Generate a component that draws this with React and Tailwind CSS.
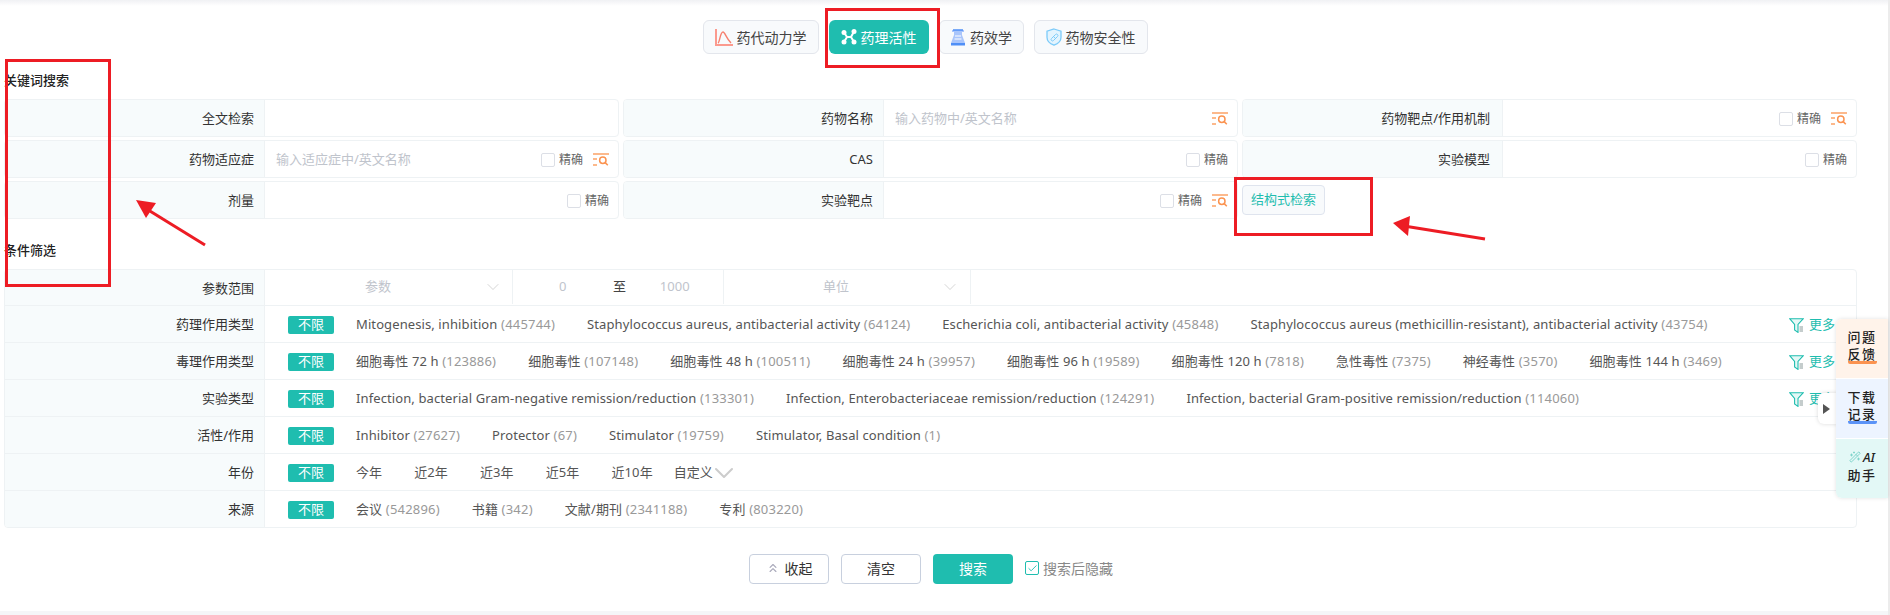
import React from 'react';
import { ChevronDown, ChevronsUp, Check, WandSparkles } from 'lucide-react';

const PkIcon = () => (
  <svg width="18" height="18" viewBox="0 0 18 18" fill="none">
    <path d="M1 1v16h17" stroke="#fb9a8e" strokeWidth="2" />
    <path d="M3 15c2-1 2-11 5-11 2 0 3 6 8 11" stroke="#f6806f" strokeWidth="1.4" />
  </svg>
);

const ActivityIcon = () => (
  <svg width="16" height="16" viewBox="0 0 16 16" fill="none">
    <path d="M3 3.5L6 8l-3 5M13 2.5L10 8l3 5M6 8h4" stroke="#fff" strokeWidth="2" />
    <circle cx="3" cy="3.5" r="2.5" fill="#fff" />
    <circle cx="13" cy="2.5" r="2.5" fill="#fff" />
    <circle cx="3" cy="13" r="2.5" fill="#fff" />
    <circle cx="13" cy="13" r="2.5" fill="#fff" />
  </svg>
);

const EffectIcon = () => (
  <svg width="16" height="17" viewBox="0 0 16 17" fill="none">
    <path d="M2 1h12v2h-2v3l3 8v2H1v-2l3-8V3H2z" fill="#a9c5fb" />
    <path d="M1 14h14v2.5H1z" fill="#4f8ff7" />
    <path d="M5 7h6M4.5 10h7" stroke="#fff" strokeWidth="1.2" />
    <path d="M3 1h10" stroke="#4f8ff7" strokeWidth="1.5" />
  </svg>
);

const SafetyIcon = () => (
  <svg width="16" height="18" viewBox="0 0 16 18" fill="none">
    <path d="M8 1l7 2.2v6c0 4-3.2 6.6-7 8-3.8-1.4-7-4-7-8v-6z" fill="#e3f4fe" stroke="#7ccbf9" strokeWidth="1.3" />
    <path d="M5.5 10.5l4-4a1.4 1.4 0 012 2l-4 4a1.4 1.4 0 01-2-2zM7.5 8.5l2 2" stroke="#7ccbf9" strokeWidth="1" />
  </svg>
);

const SearchListIcon = () => (
  <svg width="16" height="14" viewBox="0 0 16 14" fill="none" className="shrink-0">
    <path d="M0 1h16M0 6h4M0 12h4" stroke="#fca267" strokeWidth="1.4" />
    <circle cx="9.8" cy="7.2" r="3.2" stroke="#fb9350" strokeWidth="1.5" />
    <path d="M12.2 9.6l2.6 2.6" stroke="#fb9350" strokeWidth="1.5" />
  </svg>
);

const FilterListIcon = () => (
  <svg width="15" height="15" viewBox="0 0 15 15" fill="none" className="shrink-0">
    <path d="M.7 .7h13.6L9 6.4v8L5.6 12V6.4z" stroke="#1fbdaf" strokeWidth="1.1" fill="#e5f8f6" />
    <path d="M10.5 9h3.5M10.5 11h3.5M10.5 13h3.5" stroke="#8a9a9a" strokeWidth="1" />
  </svg>
);

function ExactCheck() {
  return (
    <label className="flex items-center gap-[4px] shrink-0">
      <span className="w-[14px] h-[14px] rounded-[2px] border border-[#dcdfe6] bg-white" />
      <span className="text-[12px] text-[#666]">精确</span>
    </label>
  );
}

function Field({ label, placeholder, exact, search, lastCol }) {
  return (
    <div className="flex h-[38px] rounded-[4px] border border-[#eef2f4] overflow-hidden">
      <div
        className={`w-[260px] shrink-0 bg-[#f7fbfc] border-r border-[#eef2f4] flex items-center justify-end pt-[2px] text-[13px] text-[#333] ${
          lastCol ? 'pr-[12px]' : 'pr-[10px]'
        }`}
      >
        {label}
      </div>
      <div className="flex-1 flex items-center pl-[11px] pr-[9px] pt-[2px] gap-[10px]">
        <span className="flex-1 text-[13px] text-[#c0c4cc]">{placeholder}</span>
        {exact && <ExactCheck />}
        {search && <SearchListIcon />}
      </div>
    </div>
  );
}

function FilterItem({ name, count }) {
  return (
    <span className="text-[13px] text-[#555] whitespace-nowrap tracking-[0.1px]">
      {name}
      {count && <span className="text-[#999] tracking-[0.2px]"> ({count})</span>}
    </span>
  );
}

function FilterRow({ label, items, more, children, last }) {
  return (
    <div className={`flex ${last ? 'h-[36px]' : 'h-[37px] border-b border-[#eef2f4]'}`}>
      <div className="w-[260px] shrink-0 bg-[#f7fbfc] border-r border-[#eef2f4] flex items-center justify-end pr-[10px] pt-[2px] text-[13px] text-[#333]">
        {label}
      </div>
      <div className="flex-1 flex items-center pl-[23px] pr-[21px] pt-[2px]">
        <span className="w-[46px] h-[18px] rounded-[2px] bg-[#1fbdaf] text-white text-[13px] flex items-center justify-center mr-[22px]">
          不限
        </span>
        <div className="flex-1 flex items-center gap-[32px]">
          {items.map((it) => (
            <FilterItem key={it[0]} name={it[0]} count={it[1]} />
          ))}
          {children}
        </div>
        {more && (
          <span className="flex items-center gap-[5px] text-[13px] text-[#1fbdaf]">
            <FilterListIcon />
            更多
          </span>
        )}
      </div>
    </div>
  );
}

const tabs = [
  { name: '药代动力学', icon: <PkIcon />, w: 'w-[116px]' },
  { name: '药理活性', icon: <ActivityIcon />, w: 'w-[100px]', active: true },
  { name: '药效学', icon: <EffectIcon />, w: 'w-[85px]' },
  { name: '药物安全性', icon: <SafetyIcon />, w: 'w-[114px]' },
];

const pharmaItems = [
  ['Mitogenesis, inhibition', '445744'],
  ['Staphylococcus aureus, antibacterial activity', '64124'],
  ['Escherichia coli, antibacterial activity', '45848'],
  ['Staphylococcus aureus (methicillin-resistant), antibacterial activity', '43754'],
];

const toxItems = [
  ['细胞毒性 72 h', '123886'],
  ['细胞毒性', '107148'],
  ['细胞毒性 48 h', '100511'],
  ['细胞毒性 24 h', '39957'],
  ['细胞毒性 96 h', '19589'],
  ['细胞毒性 120 h', '7818'],
  ['急性毒性', '7375'],
  ['神经毒性', '3570'],
  ['细胞毒性 144 h', '3469'],
];

const expItems = [
  ['Infection, bacterial Gram-negative remission/reduction', '133301'],
  ['Infection, Enterobacteriaceae remission/reduction', '124291'],
  ['Infection, bacterial Gram-positive remission/reduction', '114060'],
];

const activityItems = [
  ['Inhibitor', '27627'],
  ['Protector', '67'],
  ['Stimulator', '19759'],
  ['Stimulator, Basal condition', '1'],
];

const yearItems = [['今年'], ['近2年'], ['近3年'], ['近5年'], ['近10年']];

const sourceItems = [
  ['会议', '542896'],
  ['书籍', '342'],
  ['文献/期刊', '2341188'],
  ['专利', '803220'],
];

export default function App() {
  return (
    <div className="relative w-[1890px] h-[615px] overflow-hidden bg-white flex flex-col font-['Noto_Sans','Noto_Sans_CJK_SC',sans-serif]">
      <div className="h-[6px] shrink-0 bg-gradient-to-b from-[#f0f1f4] to-white" />

      {/* tabs */}
      <div className="mt-[14px] flex justify-center gap-[10px] pr-[40px]">
        {tabs.map((t) => (
          <div
            key={t.name}
            className={`${t.w} h-[34px] rounded-[6px] flex items-center justify-center gap-[4px] text-[14px] ${
              t.active ? 'bg-[#1fbdaf] text-white' : 'bg-[#f8fafc] border border-[#e3e6ec] text-[#444]'
            }`}
          >
            {t.icon}
            {t.name}
          </div>
        ))}
      </div>

      <div className="pl-[4px] w-[1857px]">
        <div className="mt-[16px] mb-[9px] h-[20px] leading-[20px] text-[13px] font-medium text-[#222]">关键词搜索</div>
        <div className="grid grid-cols-3 gap-x-[4px] gap-y-[3px]">
          <Field label="全文检索" />
          <Field label="药物名称" placeholder="输入药物中/英文名称" search />
          <Field label="药物靶点/作用机制" exact search lastCol />
          <Field label="药物适应症" placeholder="输入适应症中/英文名称" exact search />
          <Field label="CAS" exact />
          <Field label="实验模型" exact lastCol />
          <Field label="剂量" exact />
          <Field label="实验靶点" exact search />
          <div className="pt-[4px]">
            <button className="w-[83px] h-[30px] rounded-[4px] border border-[#dfe4ee] bg-[#f8fafc] text-[13px] text-[#1fbdaf]">
              结构式检索
            </button>
          </div>
        </div>

        <div className="mt-[21px] mb-[9px] h-[20px] leading-[20px] text-[13px] font-medium text-[#222]">条件筛选</div>
        <div className="rounded-[4px] border border-[#eef2f4] overflow-hidden">
          <div className="flex h-[36px] border-b border-[#eef2f4]">
            <div className="w-[260px] shrink-0 bg-[#f7fbfc] border-r border-[#eef2f4] flex items-center justify-end pr-[10px] pt-[2px] text-[13px] text-[#333]">
              参数范围
            </div>
            <div className="flex h-[34px] text-[13px] text-[#c0c4cc]">
              <div className="w-[248px] border-r border-[#eef2f4] flex items-center pr-[9px]">
                <span className="flex-1 text-center pl-[8px]">参数</span>
                <ChevronDown size={20} strokeWidth={1} className="text-[#ccc]" />
              </div>
              <div className="w-[211px] border-r border-[#eef2f4] flex items-center">
                <span className="w-[100px] text-center">0</span>
                <span className="w-[14px] text-center text-[#444]">至</span>
                <span className="w-[97px] text-center">1000</span>
              </div>
              <div className="w-[247px] border-r border-[#eef2f4] flex items-center pr-[10px]">
                <span className="flex-1 text-center pl-[8px]">单位</span>
                <ChevronDown size={20} strokeWidth={1} className="text-[#ccc]" />
              </div>
            </div>
          </div>
          <FilterRow label="药理作用类型" items={pharmaItems} more />
          <FilterRow label="毒理作用类型" items={toxItems} more />
          <FilterRow label="实验类型" items={expItems} more />
          <FilterRow label="活性/作用" items={activityItems} />
          <FilterRow label="年份" items={yearItems}>
            <span className="flex items-center text-[13px] text-[#555] -ml-[11px]">
              自定义
              <ChevronDown size={32} strokeWidth={1.5} className="text-[#ccc] -ml-[5px] -my-[4px]" />
            </span>
          </FilterRow>
          <FilterRow label="来源" items={sourceItems} last />
        </div>
      </div>

      {/* actions */}
      <div className="mt-[26px] flex items-center pl-[749px] gap-[12px] text-[14px]">
        <button className="w-[80px] h-[30px] pb-[2px] rounded-[4px] border border-[#c8d0de] flex items-center justify-center gap-[5px] text-[#333]">
          <ChevronsUp size={14} className="text-[#aab]" />
          收起
        </button>
        <button className="w-[80px] h-[30px] pb-[2px] rounded-[4px] border border-[#c8d0de] text-[#333]">清空</button>
        <button className="w-[80px] h-[30px] pb-[2px] rounded-[4px] bg-[#1fbdaf] text-white">搜索</button>
        <label className="flex items-center gap-[4px] text-[#888] -mt-[2px]">
          <span className="w-[14px] h-[14px] rounded-[2px] border border-[#1fbdaf] flex items-center justify-center">
            <Check size={11} className="text-[#1fbdaf]" />
          </span>
          搜索后隐藏
        </label>
      </div>

      <div className="mt-auto h-[4px] bg-[#f5f6f8]" />

      {/* scrollbar sliver */}
      <div className="absolute right-0 top-0 bottom-0 w-[2px] bg-[#ececec]" />

      {/* floating side panel */}
      <div className="absolute left-[1818px] top-[393px] w-[20px] h-[31px] rounded-l-[6px] bg-white shadow-[0_0_4px_rgba(0,0,0,0.15)] flex items-center pl-[5px]">
        <span className="w-0 h-0 border-y-[5px] border-y-transparent border-l-[7px] border-l-[#555]" />
      </div>
      <div className="absolute left-[1836px] top-[319px] w-[52px] h-[179px] rounded-l-[6px] overflow-hidden shadow-[0_0_4px_rgba(0,0,0,0.12)] flex flex-col gap-[1px] bg-white text-[13px] font-medium leading-[16px] tracking-[1.5px] text-[#222] text-center">
        <div className="h-[59px] bg-[#fff3ea] pt-[10px]">
          问题
          <span className="block mx-auto w-[29px] h-[17px] leading-[14px] mt-[2px] border-b-[3px] border-[#fb9350] rounded-[2px]">反馈</span>
        </div>
        <div className="h-[59px] bg-[#edf4ff] pt-[10px]">
          下载
          <span className="block mx-auto w-[29px] h-[17px] leading-[14px] mt-[2px] border-b-[3px] border-[#5b93f7] rounded-[2px]">记录</span>
        </div>
        <div className="h-[59px] bg-[#e3f8f6] pt-[10px]">
          <span className="flex items-center justify-center">
            <WandSparkles size={12} className="text-[#7fd4cb] mr-[2px]" />
            <span className="italic font-medium tracking-[0]">AI</span>
          </span>
          <span className="block mt-[2px]">助手</span>
        </div>
      </div>

      {/* red annotations */}
      <div className="absolute left-[825px] top-[8px] w-[115px] h-[60px] border-[3px] border-[#ed1c24]" />
      <div className="absolute left-[5px] top-[59px] w-[106px] h-[228px] border-[3px] border-[#ed1c24]" />
      <div className="absolute left-[1234px] top-[177px] w-[139px] h-[59px] border-[3px] border-[#ed1c24]" />
      <svg className="absolute left-[130px] top-[195px]" width="80" height="55" viewBox="0 0 80 55" fill="none">
        <path d="M15 13L75 50" stroke="#ed1c24" strokeWidth="3" />
        <path d="M6 5l20 3-10 15z" fill="#ed1c24" />
      </svg>
      <svg className="absolute left-[1390px] top-[215px]" width="100" height="30" viewBox="0 0 100 30" fill="none">
        <path d="M14 11L95 24" stroke="#ed1c24" strokeWidth="3" />
        <path d="M3 8l17-7-2 20z" fill="#ed1c24" />
      </svg>
    </div>
  );
}
